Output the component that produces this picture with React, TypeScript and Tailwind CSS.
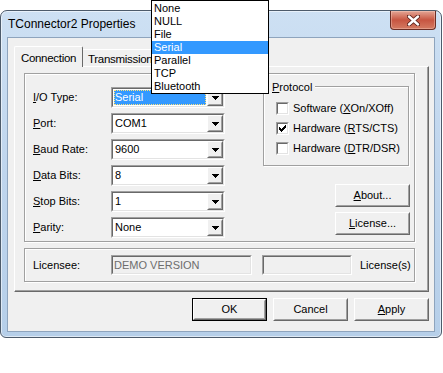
import React from "react";

const ui = "font-['Liberation_Sans',Arial,sans-serif] text-[11px] text-black";
const sunkenOuter = "border border-t-[#a0a0a0] border-l-[#a0a0a0] border-r-white border-b-white";
const sunkenInner = "border border-t-[#696969] border-l-[#696969] border-r-[#e3e3e3] border-b-[#e3e3e3]";
const etched = "border border-[#a0a0a0] shadow-[inset_1px_1px_0_#fff,1px_1px_0_#fff]";

const U = ({ children }: { children: React.ReactNode }) => (
  <span className="underline underline-offset-[1px]">{children}</span>
);

function Raised({ className = "", children }: { className?: string; children?: React.ReactNode }) {
  return (
    <div className={`border border-t-white border-l-white border-r-[#696969] border-b-[#696969] bg-[#f0f0f0] ${className}`}>
      <div className="flex h-full w-full items-center justify-center border border-t-[#f0f0f0] border-l-[#f0f0f0] border-r-[#a0a0a0] border-b-[#a0a0a0]">
        {children}
      </div>
    </div>
  );
}

const Arrow = () => (
  <svg width="7" height="4" viewBox="0 0 7 4" shapeRendering="crispEdges">
    <path d="M0 0h7v1h-1v1h-1v1h-1v1h-1v-1h-1v-1h-1v-1h-1z" fill="#000" />
  </svg>
);

function Combo({ value, selected }: { value: string; selected?: boolean }) {
  return (
    <div className={`h-[21px] w-[114px] ${sunkenOuter}`}>
      <div className={`flex h-full bg-white ${sunkenInner}`}>
        <div className="flex flex-1 items-center p-[1px]">
          {selected ? (
            <span className="flex h-full w-full items-center bg-[#3399ff] pl-[1px] text-white outline-1 -outline-offset-1 outline-dotted outline-[#ffe37a]">
              {value}
            </span>
          ) : (
            <span className="pl-[1px]">{value}</span>
          )}
        </div>
        <Raised className="h-full w-[16px]">
          <Arrow />
        </Raised>
      </div>
    </div>
  );
}

function Check({ label, checked }: { label: React.ReactNode; checked?: boolean }) {
  return (
    <div className="flex h-[13px] items-center gap-[4px]">
      <div className={`h-[13px] w-[13px] ${sunkenOuter}`}>
        <div className={`flex h-full w-full items-center justify-center bg-white ${sunkenInner}`}>
          {checked && (
            <svg width="7" height="7" viewBox="0 0 7 7" shapeRendering="crispEdges">
              <path d="M0 2h1v1h1v1h1v-1h1v-1h1v-1h1v-1h1v3h-1v1h-1v1h-1v1h-1v1h-1v-1h-1v-1h-1v-1h-1z" fill="#000" />
            </svg>
          )}
        </div>
      </div>
      <span className="whitespace-nowrap">{label}</span>
    </div>
  );
}

function Btn({ children, def }: { children: React.ReactNode; def?: boolean }) {
  return (
    <div className={`h-[23px] w-[75px] ${def ? "border border-black" : ""}`}>
      <Raised className="h-full w-full">{children}</Raised>
    </div>
  );
}

const rows = [
  { u: "I", rest: "/O Type:", value: "Serial", sel: true },
  { u: "P", rest: "ort:", value: "COM1" },
  { u: "B", rest: "aud Rate:", value: "9600" },
  { u: "D", rest: "ata Bits:", value: "8" },
  { u: "S", rest: "top Bits:", value: "1" },
  { u: "P", rest: "arity:", value: "None" },
];

const items = ["None", "NULL", "File", "Serial", "Parallel", "TCP", "Bluetooth"];

export default function App() {
  return (
    <div className={`relative h-[373px] w-[443px] bg-white pt-[10px] ${ui}`}>
      {/* window */}
      <div className="flex h-[328px] w-[442px] flex-col rounded-t-[7px] rounded-b-[6px] border border-[#4d5b6b] bg-gradient-to-b from-[#cde0f3] via-[#bfd5ed] to-[#b6cfe9] shadow-[inset_0_0_0_1px_rgba(255,255,255,0.55)]">
        <div className="flex h-[26px] items-start justify-between">
          <span className="pl-[7px] pt-[6px] text-[12px] leading-[14px]">TConnector2 Properties</span>
          <div className="mr-[5px] flex h-[19px] w-[46px] items-center justify-center rounded-b-[4px] border border-t-0 border-[#6b2d24] bg-gradient-to-b from-[#e3a595] via-[#c75541] to-[#d47a62] shadow-[inset_0_0_0_1px_rgba(255,220,210,0.35)]">
            <svg width="13" height="11" viewBox="0 0 13 11">
              <path d="M2 1.5L11 9.5M11 1.5L2 9.5" stroke="#5a2019" strokeWidth="4.2" strokeLinecap="round" />
              <path d="M2 1.5L11 9.5M11 1.5L2 9.5" stroke="#fff" strokeWidth="2.4" strokeLinecap="round" />
            </svg>
          </div>
        </div>

        {/* client */}
        <div className="mx-[6px] flex h-[295px] flex-col border border-[#8ea4bd] bg-[#f0f0f0]">
          {/* tabs */}
          <div className="flex h-[28px] items-end pl-[6px] text-[11.5px] tracking-[-0.3px]">
            <div className="relative z-10 -mb-[1px] flex h-[21px] w-[69px] items-start justify-center rounded-t-[2px] border border-b-0 border-t-white border-l-white border-r-[#696969] bg-[#f0f0f0] pt-[3px]">
              Connection
            </div>
            <div className="flex h-[17px] w-[80px] items-start overflow-hidden rounded-tr-[2px] border border-b-0 border-l-0 border-t-white border-r-[#696969] pl-[5px] pt-[2px] leading-[14px]">
              Transmission
            </div>
          </div>

          {/* tab page */}
          <div className="ml-[6px] flex h-[226px] w-[415px] flex-col border border-t-white border-l-white border-r-[#696969] border-b-[#696969] pl-[9px] pt-[6px] shadow-[inset_-1px_-1px_0_#a0a0a0]">
            <div className={`flex h-[169px] w-[391px] ${etched}`}>
              <div className="flex flex-col gap-[5px] pl-[8px] pt-[13px]">
                {rows.map((r, i) => (
                  <div key={i} className="flex items-center">
                    <span className="w-[78px]">
                      <U>{r.u}</U>
                      {r.rest}
                    </span>
                    <Combo value={r.value} selected={r.sel} />
                  </div>
                ))}
              </div>
              <div className="ml-[38px] flex w-[147px] flex-col pt-[12px]">
                <div className={`relative flex h-[80px] w-[146px] flex-col gap-[7px] pl-[12px] pt-[15px] ${etched}`}>
                  <span className="absolute -top-[8px] left-[5px] bg-[#f0f0f0] px-[3px]">
                    <U>P</U>rotocol
                  </span>
                  <Check label={<>Software (<U>X</U>On/XOff)</>} />
                  <Check checked label={<>Hardware (<U>R</U>TS/CTS)</>} />
                  <Check label={<>Hardware (<U>D</U>TR/DSR)</>} />
                </div>
                <div className="mt-[18px] flex flex-col items-end gap-[5px]">
                  <Btn><span><U>A</U>bout...</span></Btn>
                  <Btn><span><U>L</U>icense...</span></Btn>
                </div>
              </div>
            </div>

            <div className={`mt-[6px] flex h-[34px] w-[391px] items-center pl-[8px] ${etched}`}>
              <span className="w-[78px]">Licensee:</span>
              <div className={`h-[20px] w-[141px] ${sunkenOuter}`}>
                <div className={`flex h-full items-center bg-[#f0f0f0] pl-[1px] text-[#6d6d6d] ${sunkenInner}`}>DEMO VERSION</div>
              </div>
              <div className={`ml-[10px] h-[20px] w-[90px] ${sunkenOuter}`}>
                <div className={`h-full bg-[#f0f0f0] ${sunkenInner}`} />
              </div>
              <span className="ml-[8px]">License(s)</span>
            </div>
          </div>

          {/* buttons */}
          <div className="mt-[6px] flex justify-end gap-[6px] pr-[5px]">
            <Btn def>OK</Btn>
            <Btn>Cancel</Btn>
            <Btn><span><U>A</U>pply</span></Btn>
          </div>
        </div>
      </div>

      {/* open dropdown list */}
      <div className="absolute left-[151px] top-0 w-[118px] border border-black bg-white pt-[1px]">
        {items.map((it) => (
          <div key={it} className={`h-[13px] pl-[2px] leading-[13px] ${it === "Serial" ? "bg-[#3399ff] text-white" : ""}`}>
            {it}
          </div>
        ))}
      </div>
    </div>
  );
}
